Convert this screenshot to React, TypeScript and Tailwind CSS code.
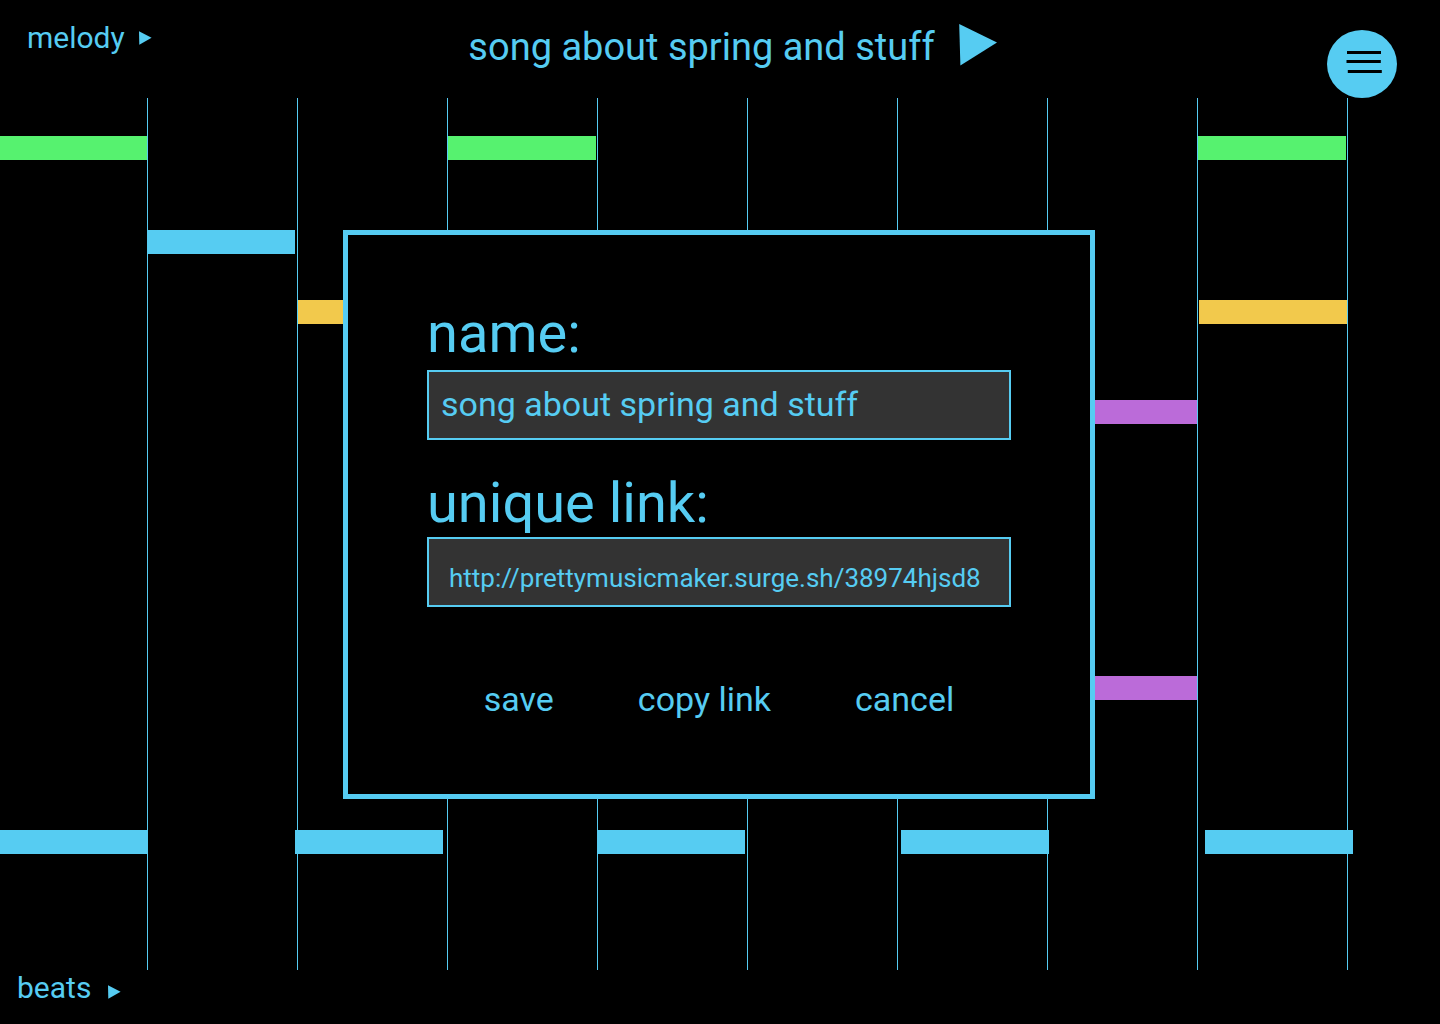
import { useState } from "react";

type Note = { x: number; y: number; color: string };

const GREEN = "bg-[#56f26f]";
const BLUE = "bg-[#56ccf2]";
const YELLOW = "bg-[#f2c94c]";
const PURPLE = "bg-[#bb6bd9]";

// Offsets are measured from the top-left corner of the sequencer canvas.
const notes: Note[] = [
  { x: 0, y: 38, color: GREEN },
  { x: 448, y: 38, color: GREEN },
  { x: 1198, y: 38, color: GREEN },
  { x: 147, y: 132, color: BLUE },
  { x: 298, y: 202, color: YELLOW },
  { x: 1199, y: 202, color: YELLOW },
  { x: 1049, y: 302, color: PURPLE },
  { x: 1049, y: 578, color: PURPLE },
  { x: 0, y: 732, color: BLUE },
  { x: 295, y: 732, color: BLUE },
  { x: 597, y: 732, color: BLUE },
  { x: 901, y: 732, color: BLUE },
  { x: 1205, y: 732, color: BLUE },
];

const columns = [0, 1, 2, 3, 4, 5, 6, 7];

function SmallPlay() {
  return (
    <svg width="13" height="14" viewBox="0 0 13 14" fill="currentColor" aria-hidden="true">
      <path d="M0 .2 12.6 6.8.3 13.8Z" />
    </svg>
  );
}

function Header() {
  return (
    <header className="grid h-[98px] grid-cols-[1fr_auto_1fr] items-start pr-[43px] pl-[27px]">
      <button type="button" className="mt-5 flex items-center gap-[14px] justify-self-start text-[30px] leading-9">
        melody
        <SmallPlay />
      </button>
      <div className="mt-6 flex items-start gap-6 pl-[42px]">
        <h1 className="text-[38px] leading-[46px]">song about spring and stuff</h1>
        <button type="button" aria-label="Play song">
          <svg width="39" height="42" viewBox="0 0 39 42" fill="currentColor" aria-hidden="true">
            <path d="M.2 0 38 18.5 1.4 41.6Z" />
          </svg>
        </button>
      </div>
      <button type="button" aria-label="Menu" className="mt-[30px] justify-self-end">
        <svg width="70" height="68" viewBox="0 0 70 68" aria-hidden="true">
          <ellipse cx="35" cy="34" rx="35" ry="34" fill="currentColor" />
          <path d="M20 22.5h34M19.5 31.6h34.3M20.8 41.5h34" stroke="#000" strokeWidth="3" />
        </svg>
      </button>
    </header>
  );
}

function Sequencer() {
  return (
    <main className="relative flex min-h-[872px] flex-1 overflow-hidden">
      {notes.map((note) => (
        <div
          key={`${note.x}-${note.y}`}
          className={`absolute h-6 w-[148px] ${note.color}`}
          style={{ left: note.x, top: note.y }}
        />
      ))}
      {/* Bar lines stay on top of the notes. */}
      <div className="relative w-[148px] shrink-0 border-r border-[#56ccf2]" />
      {columns.map((column) => (
        <div key={column} className="relative w-[150px] shrink-0 border-r border-[#56ccf2]" />
      ))}
    </main>
  );
}

function SaveDialog() {
  const [name, setName] = useState("song about spring and stuff");
  return (
    <div className="absolute inset-0 flex items-center justify-center pt-[5px] pr-[2px]">
      <form
        role="dialog"
        aria-label="Save song"
        className="flex w-full max-w-[752px] flex-col border-5 border-[#56ccf2] bg-black px-[79px] pt-[66px] pb-[75px]"
        onSubmit={(event) => event.preventDefault()}
      >
        <label htmlFor="song-name" className="mb-[5px] text-[56px] leading-16">
          name:
        </label>
        <input
          id="song-name"
          type="text"
          value={name}
          onChange={(event) => setName(event.target.value)}
          className="h-[70px] w-full border-2 border-[#56ccf2] bg-[#333333] px-3 pb-[2px] text-[34px] outline-none"
        />
        <label htmlFor="song-link" className="mt-[31px] mb-[2px] text-[56px] leading-16">
          unique link:
        </label>
        <input
          id="song-link"
          type="text"
          readOnly
          value="http://prettymusicmaker.surge.sh/38974hjsd8"
          className="h-[70px] w-full border-2 border-[#56ccf2] bg-[#333333] px-5 pt-3 text-[26px] outline-none"
        />
        <div className="mt-[72px] flex justify-center gap-[84px] text-[34px] leading-10">
          <button type="submit">save</button>
          <button type="button">copy link</button>
          <button type="button">cancel</button>
        </div>
      </form>
    </div>
  );
}

export default function App() {
  return (
    <div className="relative flex min-h-screen flex-col bg-black font-['Roboto',sans-serif] text-[#56ccf2]">
      <Header />
      <Sequencer />
      <footer className="flex h-[54px] px-[17px]">
        <button type="button" className="flex h-9 items-center gap-[17px] text-[30px] leading-9">
          beats
          <span className="pt-2">
            <SmallPlay />
          </span>
        </button>
      </footer>
      <SaveDialog />
    </div>
  );
}
